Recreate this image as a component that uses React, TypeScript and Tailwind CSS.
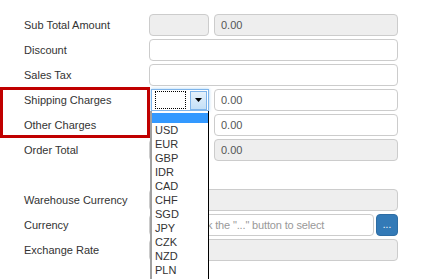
import React from "react";

const inputBase =
  "h-[22px] rounded-[4px] border border-[#cccccc] px-[6px] flex items-center text-[11px] text-[#555555]";

function Label({ children }: { children: React.ReactNode }) {
  return <div className="text-[11px] text-[#333333] leading-none">{children}</div>;
}

function Row({ label, children }: { label: string; children?: React.ReactNode }) {
  return (
    <div className="grid grid-cols-[125px_249px] items-center h-[22px]">
      <Label>{label}</Label>
      <div className="flex gap-[5px]">{children}</div>
    </div>
  );
}

const currencies = ["USD", "EUR", "GBP", "IDR", "CAD", "CHF", "SGD", "JPY", "CZK", "NZD", "PLN"];

export default function App() {
  return (
    <div
      className="relative w-[422px] h-[279px] bg-white overflow-hidden"
      style={{ fontFamily: '"Liberation Sans", Arial, sans-serif' }}
    >
      <div className="pl-6 pt-[14px] flex flex-col gap-[3px]">
        <Row label="Sub Total Amount">
          <div className={`${inputBase} w-[60px] bg-[#eeeeee]`} />
          <div className={`${inputBase} w-[184px] bg-[#eeeeee]`}>0.00</div>
        </Row>
        <Row label="Discount">
          <div className={`${inputBase} w-[249px] bg-white`} />
        </Row>
        <Row label="Sales Tax">
          <div className={`${inputBase} w-[249px] bg-white`} />
        </Row>
        <Row label="Shipping Charges">
          <div className="w-[60px] h-[22px] flex items-center pl-[2px]">
            <div className="w-[58px] h-[22px] border border-[#7eb4ea] bg-white flex items-center shadow-[0_0_3px_rgba(102,175,233,0.6)]">
              <div className="ml-[3px] w-[31px] h-[18px] border border-dotted border-black" />
              <div className="ml-auto mr-[1px] w-[17px] h-[19px] border border-[#7eb4ea] bg-gradient-to-b from-[#e5f1fb] to-[#c4e0f7] flex items-center justify-center">
                <svg width="7" height="4" viewBox="0 0 7 4">
                  <path d="M0 0 L7 0 L3.5 4 Z" fill="#000" />
                </svg>
              </div>
            </div>
          </div>
          <div className={`${inputBase} w-[184px] bg-white`}>0.00</div>
        </Row>
        <Row label="Other Charges">
          <div className={`${inputBase} w-[60px] bg-white`} />
          <div className={`${inputBase} w-[184px] bg-white`}>0.00</div>
        </Row>
        <Row label="Order Total">
          <div className={`${inputBase} w-[60px] bg-[#eeeeee]`} />
          <div className={`${inputBase} w-[184px] bg-[#eeeeee]`}>0.00</div>
        </Row>
        <div className="h-[22px]" />
        <Row label="Warehouse Currency">
          <div className={`${inputBase} w-[249px] bg-[#eeeeee]`} />
        </Row>
        <div className="grid grid-cols-[125px_249px] items-center h-[22px]">
          <Label>Currency</Label>
          <div className="flex gap-[2px]">
            <div className={`${inputBase} w-[225px] bg-white text-[#999999] whitespace-nowrap overflow-hidden tracking-[-0.15px]`}>
              Please click the "..." button to select
            </div>
            <div className="w-[22px] h-[22px] rounded-[4px] bg-[#337ab7] border border-[#2e6da4] flex items-center justify-center text-white text-[10px] leading-none">
              ...
            </div>
          </div>
        </div>
        <Row label="Exchange Rate">
          <div className={`${inputBase} w-[249px] bg-[#eeeeee]`} />
        </Row>
      </div>

      {/* dropdown list */}
      <div className="absolute left-[150px] top-[111px] w-[59px] h-[180px] bg-white border-l-2 border-l-[#a0a0a0] border-r border-r-black pt-[2px]">
        <div className="h-[10px] bg-[#3399ff]" />
        {currencies.map((c) => (
          <div key={c} className="h-[14px] flex items-center pl-[3px] text-[11px] text-[#333333] leading-none">
            {c}
          </div>
        ))}
      </div>

      {/* annotation rectangle */}
      <div className="absolute left-0 top-[87px] w-[150px] h-[51px] border-[3px] border-[#c00000]" />
    </div>
  );
}
